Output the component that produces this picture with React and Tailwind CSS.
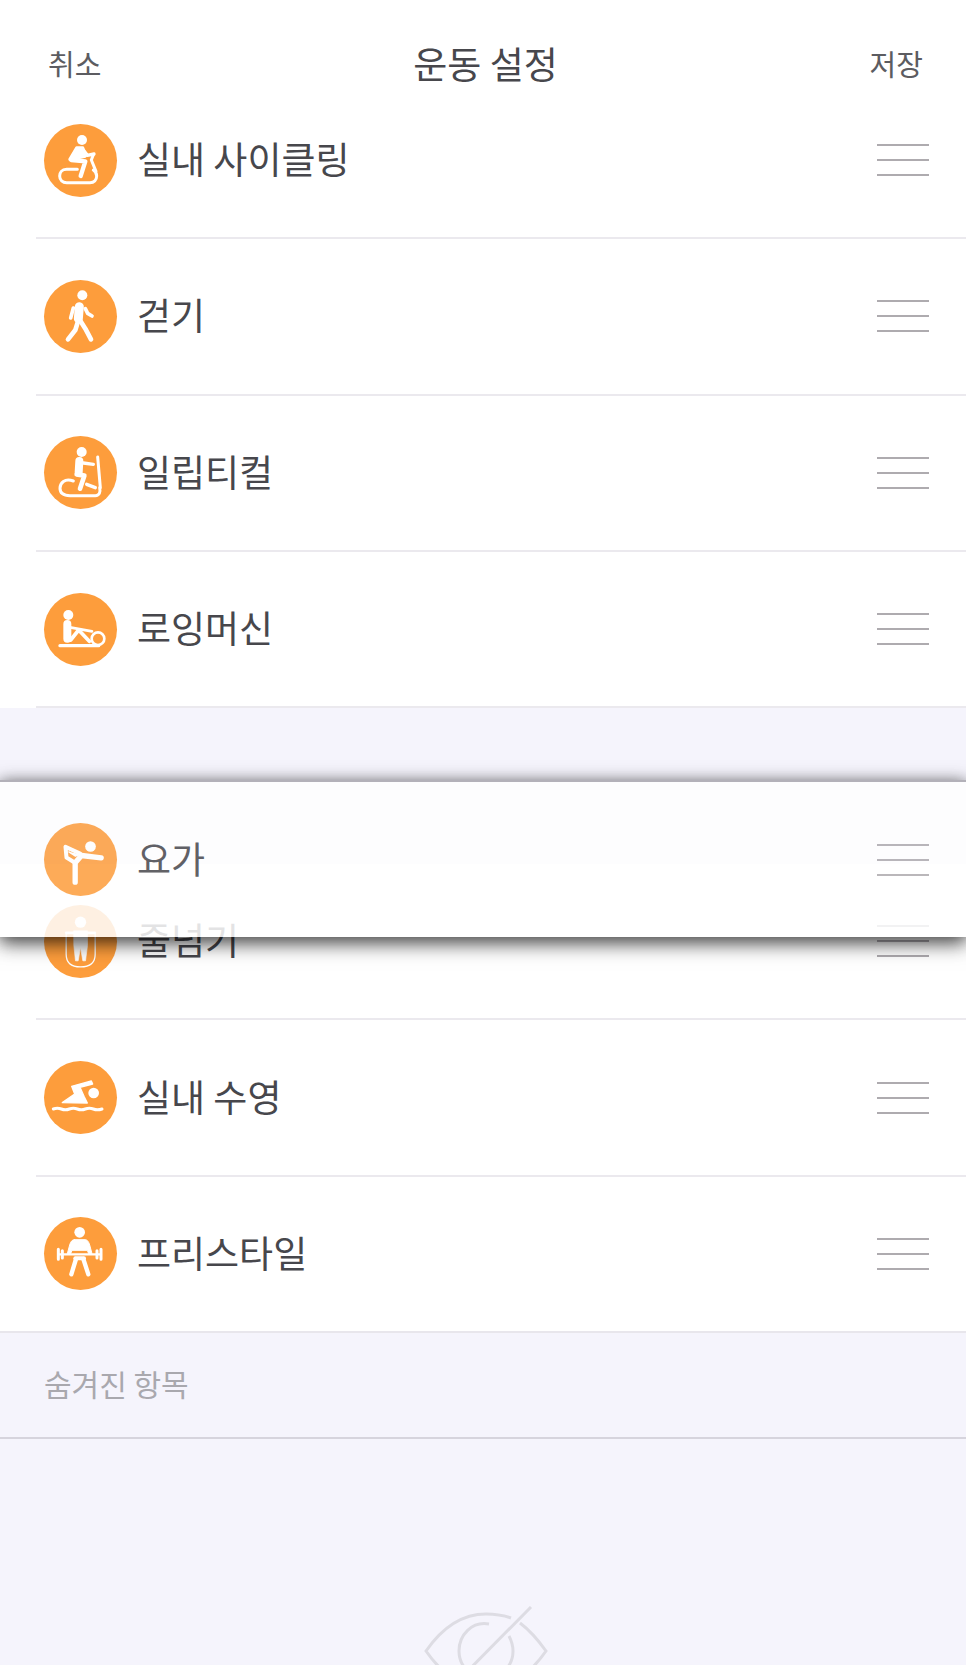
const FONT = "font-['Noto_Sans_CJK_KR','Noto_Sans',sans-serif]";

// icons are traced in 3x coordinates, so every viewBox is 219 wide around the circle centre
const BikeIcon = () => (
  <svg viewBox="42 44 219 219" className="h-full w-full" fill="none" stroke="#fff" strokeLinecap="round" strokeLinejoin="round">
    <circle cx="156" cy="92" r="15" fill="#fff" stroke="none" />
    <path d="M140 116 L158 116 L166 140 L120 150 Z" fill="#fff" strokeWidth="10" />
    <path d="M160 122 L172 138 L192 134" strokeWidth="10" />
    <path d="M124 152 L166 156 L152 200" strokeWidth="13" />
    <path d="M190 136 L184 152 L198 186" strokeWidth="9" />
    <path d="M142 180 H110 C95 180 89 190 89 200 C89 212 98 220 110 220 H180 C192 220 200 212 200 200 C200 192 196 186 190 182" strokeWidth="9" />
  </svg>
);

const WalkIcon = () => (
  <svg viewBox="42 34 219 219" className="h-full w-full" fill="none" stroke="#fff" strokeLinecap="round" strokeLinejoin="round">
    <circle cx="157" cy="80" r="15" fill="#fff" stroke="none" />
    <path d="M148 114 L145 150" strokeWidth="27" />
    <path d="M166 120 L173 134 L186 142" strokeWidth="11" />
    <path d="M130 118 L122 148" strokeWidth="11" />
    <path d="M144 158 L136 184 L114 212" strokeWidth="14" />
    <path d="M150 155 L166 180 L183 212" strokeWidth="14" />
  </svg>
);

const EllipticalIcon = () => (
  <svg viewBox="42 37 219 219" className="h-full w-full" fill="none" stroke="#fff" strokeLinecap="round" strokeLinejoin="round">
    <circle cx="155" cy="85" r="15" fill="#fff" stroke="none" />
    <path d="M148 112 L146 146" strokeWidth="24" />
    <path d="M160 118 L190 122" strokeWidth="10" />
    <path d="M140 152 L163 156 L150 195" strokeWidth="14" />
    <path d="M203 100 L211 192" strokeWidth="9" />
    <path d="M130 172 C104 162 90 178 90 194 C90 210 104 216 120 216 L196 216 C208 216 212 206 209 192" strokeWidth="9" />
    <path d="M170 182 L196 192" strokeWidth="10" />
  </svg>
);

const RowerIcon = () => (
  <svg viewBox="42 41 219 219" className="h-full w-full" fill="none" stroke="#fff" strokeLinecap="round" strokeLinejoin="round">
    <circle cx="115" cy="107" r="15" fill="#fff" stroke="none" />
    <path d="M112 134 V178" strokeWidth="24" />
    <path d="M122 182 L146 152 L178 186" strokeWidth="11" />
    <path d="M124 145 L186 156" strokeWidth="8" />
    <circle cx="204" cy="178" r="19" strokeWidth="8" />
    <path d="M90 199 H206" strokeWidth="10" />
  </svg>
);

const SwimIcon = () => (
  <svg viewBox="42 37 219 219" className="h-full w-full" fill="none">
    <circle cx="191" cy="133" r="16" fill="#fff" />
    <path d="M97 162 L134 136 L125 113 L184 97 L188 106 L150 116 L162 143 L172 163 Z" fill="#fff" stroke="#fff" strokeLinejoin="round" strokeWidth="4" />
    <path d="M70 181 Q82 176 94 181 T118 181 T142 181 T166 181 T190 181 T216 181" stroke="#fff" strokeWidth="9" strokeLinecap="round" />
  </svg>
);

const LifterIcon = () => (
  <svg viewBox="42 40 219 219" className="h-full w-full" fill="none" stroke="#fff" strokeLinecap="round" strokeLinejoin="round">
    <circle cx="149" cy="86" r="16" fill="#fff" stroke="none" />
    <path d="M133 108 H165 C172 108 176 114 179 124 L186 150 H176 L172 140 H126 L122 150 H112 L119 124 C122 114 126 108 133 108 Z" fill="#fff" strokeWidth="3" />
    <path d="M88 152 H212" strokeWidth="7" />
    <path d="M85 137 V167 M97 141 V163 M201 141 V163 M213 137 V167" strokeWidth="9" />
    <path d="M138 166 L124 212 M160 166 L175 212" strokeWidth="13" />
    <path d="M136 164 H162" strokeWidth="12" />
  </svg>
);

const YogaIcon = () => (
  <svg viewBox="131.5 428.5 219 219" className="h-full w-full" fill="none" stroke="#fff" strokeLinecap="round" strokeLinejoin="round">
    <circle cx="271" cy="499" r="16" fill="#fff" stroke="none" />
    <path d="M225 606 V548 L244 526 L303 533" strokeWidth="16" />
    <path d="M240 520 L196 500 L199 532 L222 546" strokeWidth="12" />
    <path d="M206 515 L226 528 L240 522" fill="#fff" strokeWidth="4" />
  </svg>
);

const RopeIcon = () => (
  <svg viewBox="131.5 678.5 219 219" className="h-full w-full" fill="none" stroke="#fff" strokeLinecap="round" strokeLinejoin="round">
    <circle cx="241" cy="730" r="17" fill="#fff" stroke="none" />
    <path d="M198 762 H284" strokeWidth="8" />
    <path d="M221 756 H262 V800 L256 846 H248 L241 806 L234 846 H226 L221 800 Z" fill="#fff" strokeWidth="2" />
    <path d="M198 766 V826 Q198 864 241 864 Q285 864 285 826 V766" strokeWidth="4" />
  </svg>
);

const HandleIcon = () => (
  <div className="flex w-[52px] flex-col gap-[13px]">
    <div className="h-[2px] bg-[#aeabaf]" />
    <div className="h-[2px] bg-[#aeabaf]" />
    <div className="h-[2px] bg-[#aeabaf]" />
  </div>
);

const RowContent = ({ icon, label }) => (
  <>
    <div className="flex items-center gap-[20px]">
      <div className="h-[73px] w-[73px] rounded-full bg-[#fd9d3c]">{icon}</div>
      <span className="-mt-[3px] text-[37px] leading-none text-[#47474c]">{label}</span>
    </div>
    <HandleIcon />
  </>
);

const Row = ({ icon, label }) => (
  <div className="h-[156.3px] shrink-0 bg-white pl-[36px]">
    <div className="flex h-full items-center justify-between border-b-2 border-[#ebe9ee] pl-[8px] pr-[37px]">
      <RowContent icon={icon} label={label} />
    </div>
  </div>
);

export default function App() {
  return (
    <div className={`relative flex h-[1665px] w-[966px] flex-col overflow-hidden bg-[#f5f4fc] ${FONT}`}>
      <header className="flex h-[83px] shrink-0 items-start justify-between bg-white pl-[48px] pr-[43px] pt-[49px]">
        <span className="text-[29px] leading-none text-[#5c5c61]">취소</span>
        <span className="-mt-[4px] text-[37px] leading-none text-[#47474c]">운동 설정</span>
        <span className="text-[29px] leading-none text-[#5c5c61]">저장</span>
      </header>

      <Row icon={<BikeIcon />} label="실내 사이클링" />
      <Row icon={<WalkIcon />} label="걷기" />
      <Row icon={<EllipticalIcon />} label="일립티컬" />
      <Row icon={<RowerIcon />} label="로잉머신" />

      {/* empty slot the dragged row came from */}
      <div className="h-[156px] shrink-0" />

      <Row icon={<RopeIcon />} label="줄넘기" />
      <Row icon={<SwimIcon />} label="실내 수영" />
      <div className="h-[156.3px] shrink-0 border-b-2 border-[#e8e6ec] bg-white pl-[44px] pr-[37px]">
        <div className="flex h-full items-center justify-between">
          <RowContent icon={<LifterIcon />} label="프리스타일" />
        </div>
      </div>

      <div className="flex h-[106px] shrink-0 items-center border-b-2 border-[#d6d4dd] pb-[4px] pl-[44px]">
        <span className="text-[30px] leading-none text-[#a9a8ae]">숨겨진 항목</span>
      </div>

      <div className="flex shrink-0 justify-center pl-[6px] pt-[167px]">
        <svg width="124" height="92" viewBox="0 0 124 92" fill="none" stroke="#dddce3" strokeWidth="3">
          <path d="M87 12 C76 8 68 8 62 8 C38 8 18 22 2 45 C18 68 38 82 62 82 C86 82 106 68 122 45 C112 31 104 23 96 17" />
          <path d="M65 18 C48 15 35 29 35 45 C35 61 48 72 62 72 C76 72 89 61 89 45 C89 39 87 34 85 30" />
          <path d="M107 1 L19 90" />
        </svg>
      </div>

      {/* row being dragged, floats over the list */}
      <div className="absolute inset-x-0 top-[780px] flex h-[157px] items-center justify-between border-t-2 border-[#a8a6ae] bg-white pl-[44px] pr-[37px] opacity-85 shadow-[0_0_14px_rgba(0,0,0,0.35),0_7px_18px_rgba(0,0,0,0.75)]">
        <RowContent icon={<YogaIcon />} label="요가" />
      </div>
    </div>
  );
}
